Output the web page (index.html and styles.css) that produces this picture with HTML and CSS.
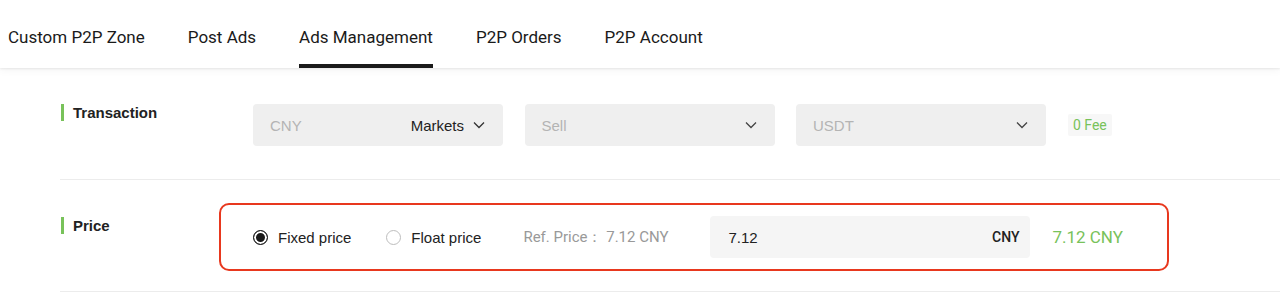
FILE: index.html
```html
<!DOCTYPE html>
<html lang="en">
<head>
    <meta charset="UTF-8">
    <meta name="viewport" content="width=device-width, initial-scale=1.0">
    <title>Ads Management</title>
    <link rel="stylesheet" href="styles.css">
</head>
<body>
    <div class="nav">
        <div class="nav-item">Custom P2P Zone</div>
        <div class="nav-item">Post Ads</div>
        <div class="nav-item active">Ads Management</div>
        <div class="nav-item">P2P Orders</div>
        <div class="nav-item">P2P Account</div>
    </div>

    <div class="form">
        <div class="row row-transaction">
            <div class="label">Transaction</div>
            <div class="controls">
                <div class="select">
                    <span class="placeholder">CNY</span>
                    <span class="select-right">
                        <span class="value">Markets</span>
                        <svg class="chevron" width="12" height="8" viewBox="0 0 12 8"><path d="M1 1.5l5 5 5-5" fill="none" stroke="#333" stroke-width="1.3"/></svg>
                    </span>
                </div>
                <div class="select">
                    <span class="placeholder">Sell</span>
                    <svg class="chevron" width="12" height="8" viewBox="0 0 12 8"><path d="M1 1.5l5 5 5-5" fill="none" stroke="#444" stroke-width="1.3"/></svg>
                </div>
                <div class="select">
                    <span class="placeholder">USDT</span>
                    <svg class="chevron" width="12" height="8" viewBox="0 0 12 8"><path d="M1 1.5l5 5 5-5" fill="none" stroke="#444" stroke-width="1.3"/></svg>
                </div>
                <span class="fee-tag">0 Fee</span>
            </div>
        </div>

        <div class="row row-price">
            <div class="label">Price</div>
            <div class="price-box">
                <label class="radio">
                    <span class="radio-dot checked"></span>
                    <span>Fixed price</span>
                </label>
                <label class="radio">
                    <span class="radio-dot"></span>
                    <span>Float price</span>
                </label>
                <span class="ref-price">Ref. Price：&nbsp;7.12 CNY</span>
                <div class="price-input">
                    <span>7.12</span>
                    <span class="unit">CNY</span>
                </div>
                <span class="price-result">7.12 CNY</span>
            </div>
        </div>
    </div>
</body>
</html>
```

FILE: styles.css
```css
:root {
    --green: #78c25a;
    --red: #e8381e;
    --text: #222;
    --muted: #999;
    --field: #efefef;
    --divider: #ececec;
}

body {
    margin: 0;
    font-family: "Liberation Sans", Arial, sans-serif;
    color: var(--text);
    background: #fff;
}

.nav {
    display: flex;
    gap: 43px;
    height: 68px;
    padding-left: 8px;
    box-shadow: 0 1px 2px rgba(0, 0, 0, 0.08), 0 3px 8px rgba(0, 0, 0, 0.04);
    position: relative;
}

.nav-item {
    box-sizing: border-box;
    height: 68px;
    padding-top: 26px;
    font-family: Roboto, sans-serif;
    font-size: 17px;
    line-height: 22px;
    color: #1a1a1a;
}

.nav-item.active {
    border-bottom: 4px solid #1a1a1a;
}

.form {
    padding-left: 60px;
}

.row {
    display: flex;
    align-items: flex-start;
    border-bottom: 1px solid var(--divider);
}

.label {
    box-sizing: border-box;
    font-size: 15px;
    font-weight: bold;
    line-height: 17px;
    border-left: 3px solid var(--green);
    padding-left: 9px;
    margin-left: 1px;
}

.row-transaction {
    padding: 36px 0 33px;
}

.row-transaction .label {
    width: 192px;
}

.controls {
    display: flex;
    align-items: center;
    gap: 21px;
}

.select {
    box-sizing: border-box;
    width: 250px;
    height: 42px;
    padding: 0 18px 0 17px;
    background: var(--field);
    border-radius: 4px;
    display: flex;
    align-items: center;
    justify-content: space-between;
    font-size: 15px;
}

.select + .select {
    margin-left: 0.5px;
}

.placeholder {
    color: #b4b4b4;
}

.select-right {
    display: flex;
    align-items: center;
    gap: 9px;
}

.value {
    color: #222;
}

.chevron {
    display: block;
}

.fee-tag {
    margin-left: 1px;
    padding: 3px 5px;
    background: #f7f7f7;
    border-radius: 2px;
    color: var(--green);
    font-family: Roboto, sans-serif;
    font-size: 14px;
    line-height: 16px;
}

.row-price {
    padding: 23px 0 20px;
}

.row-price .label {
    width: 158px;
    margin-top: 14px;
}

.price-box {
    display: flex;
    align-items: center;
    padding: 11px 44px 11px 32px;
    border: 2px solid var(--red);
    border-radius: 10px;
    font-size: 15px;
}

.radio {
    display: flex;
    align-items: center;
    gap: 10px;
    margin-right: 35px;
}

.radio + .radio {
    margin-right: 42px;
}

.radio-dot {
    box-sizing: border-box;
    width: 15px;
    height: 15px;
    border-radius: 50%;
    border: 1px solid #bdbdbd;
    background: #fff;
}

.radio-dot.checked {
    border: 1.5px solid #1a1a1a;
    background: #1a1a1a;
    box-shadow: inset 0 0 0 2px #fff;
}

.ref-price {
    font-family: Roboto, sans-serif;
    font-size: 15px;
    color: var(--muted);
    margin-right: 42px;
}

.price-input {
    box-sizing: border-box;
    width: 320px;
    height: 42px;
    padding: 0 11px 0 18px;
    background: #f5f5f5;
    border-radius: 4px;
    display: flex;
    align-items: center;
    justify-content: space-between;
}

.unit {
    font-family: Roboto, sans-serif;
    font-weight: 500;
    font-size: 14px;
}

.price-result {
    margin-left: 22px;
    font-family: Roboto, sans-serif;
    font-size: 17px;
    color: var(--green);
}
```
